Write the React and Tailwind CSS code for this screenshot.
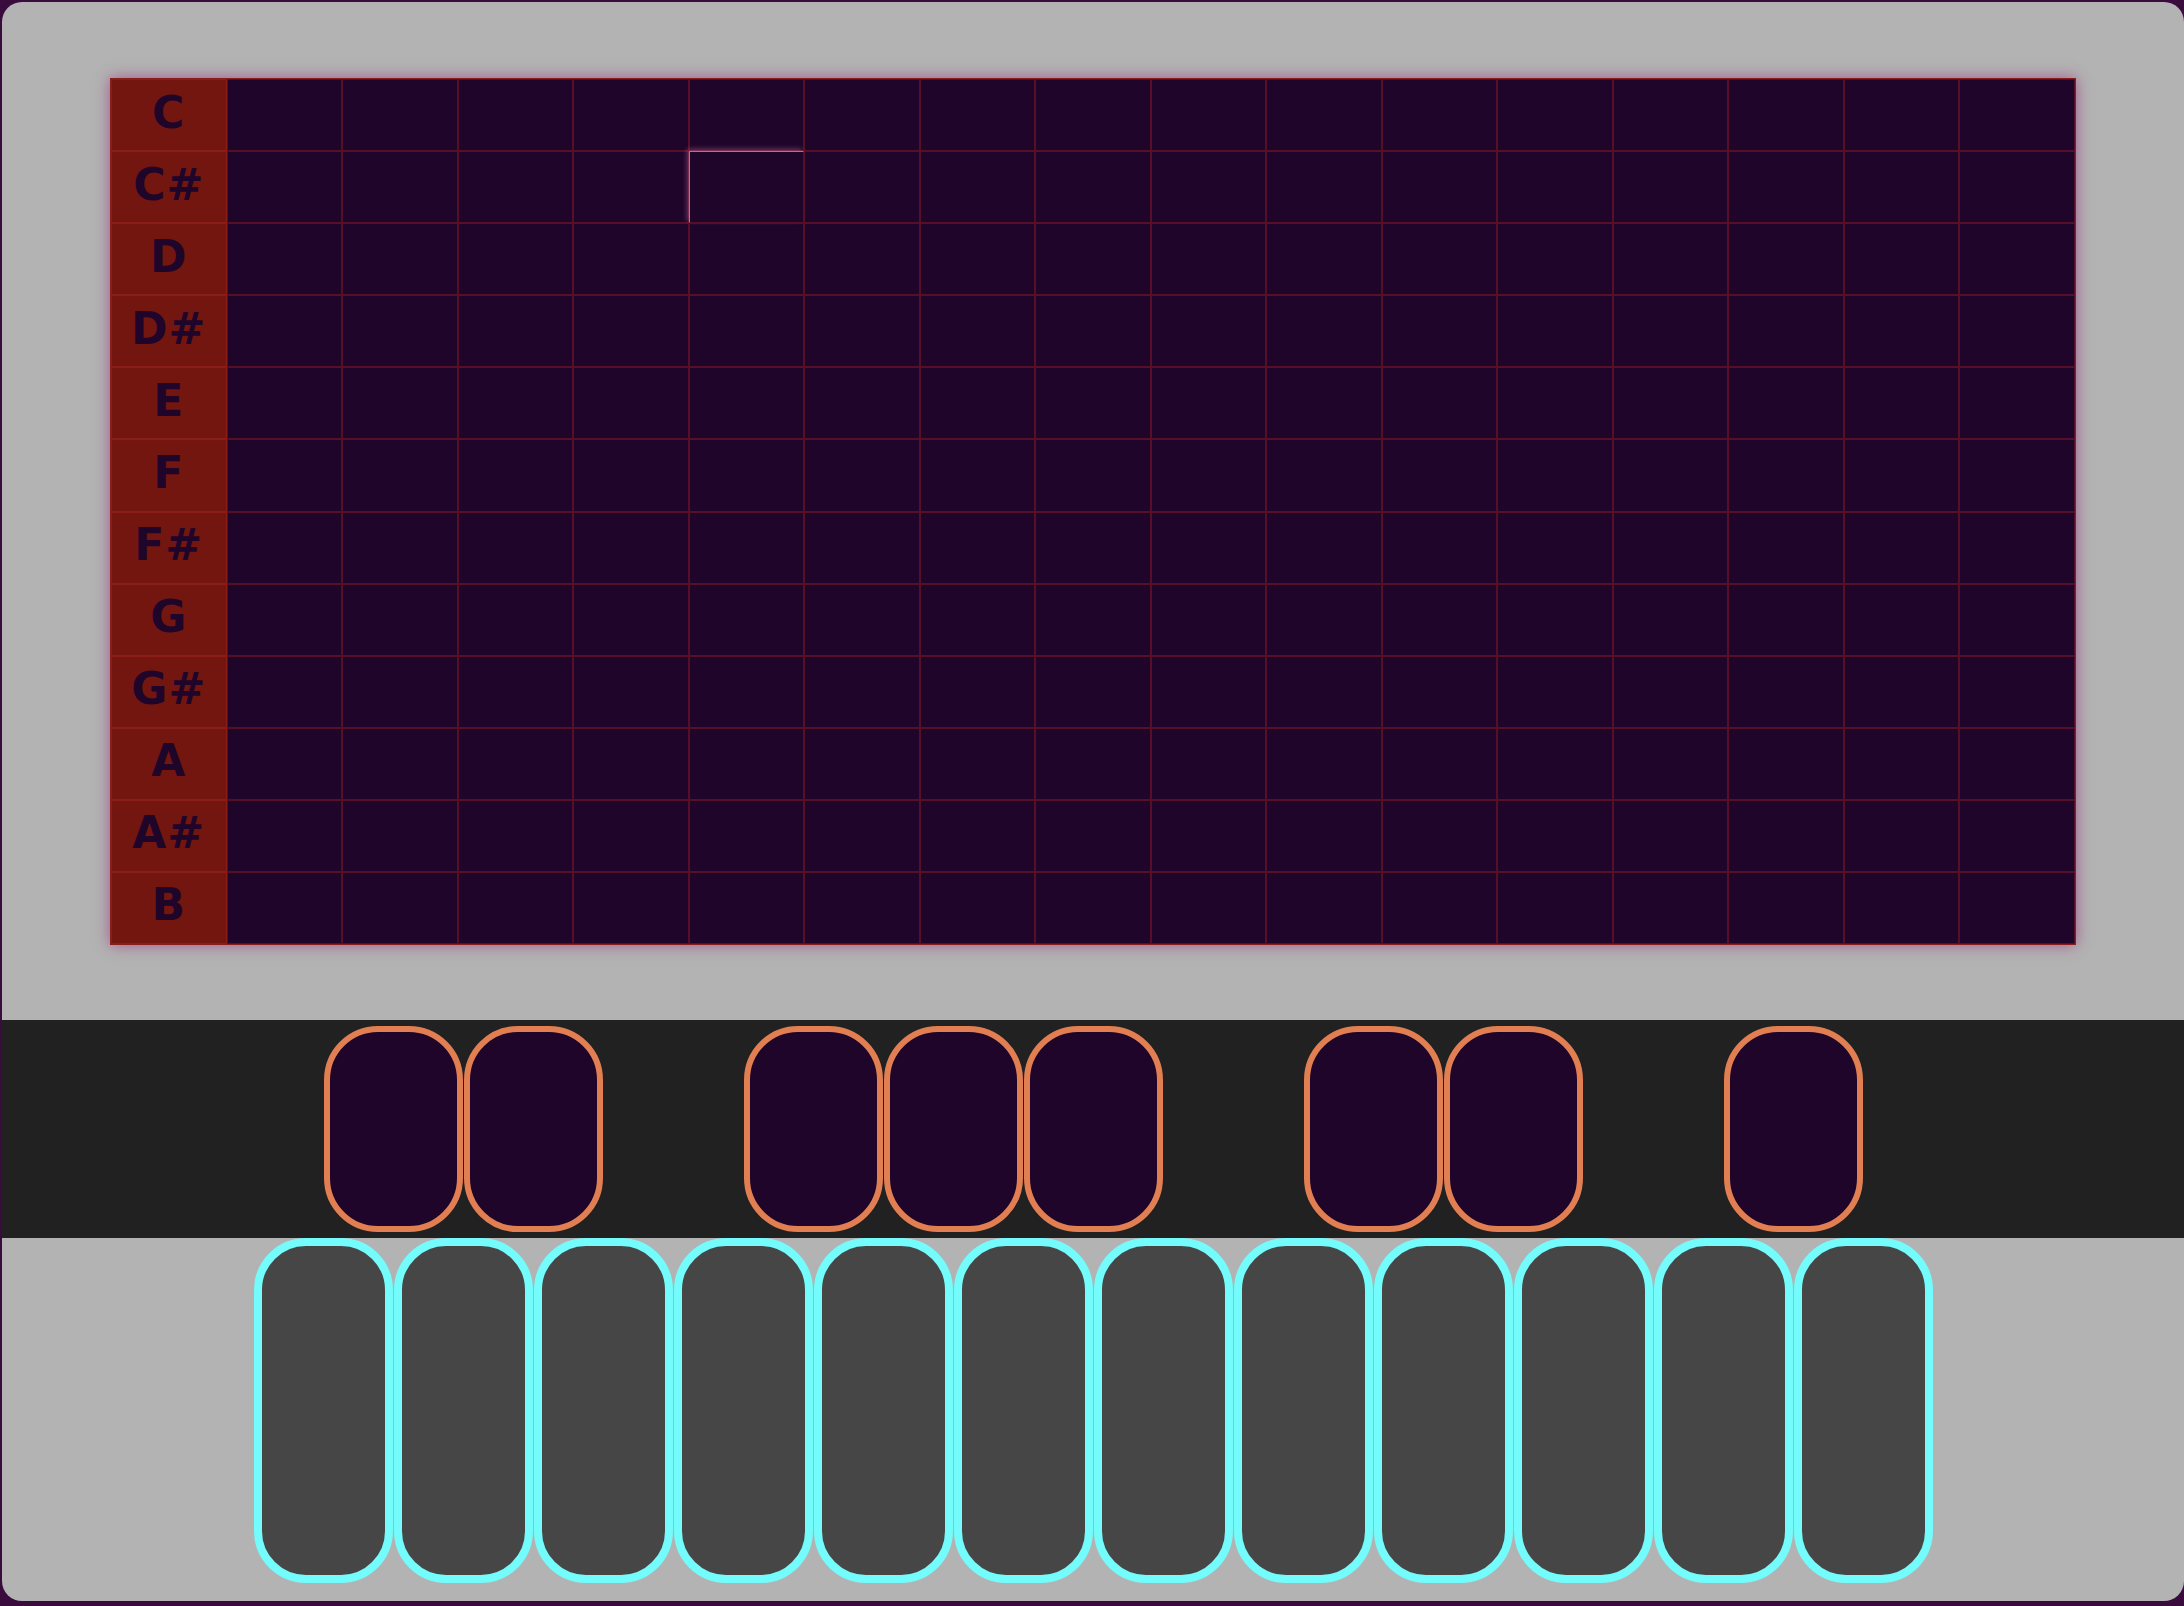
import React from "react";

const NOTES = ["C", "C#", "D", "D#", "E", "F", "F#", "G", "G#", "A", "A#", "B"];
const BLACK = [true, true, false, true, true, true, false, true, true, false, true];

export default function App() {
  return (
    <div className="min-h-screen w-full bg-[#3a0b3d] pt-[2px] pl-[2px]">
      <div className="flex h-[1599px] w-[2182px] flex-col overflow-hidden rounded-[20px] bg-[#b3b3b3]">
        <div className="h-[76px] shrink-0" />
        <div className="mx-auto grid h-[867px] w-[1966px] shrink-0 grid-cols-17 grid-rows-12 border border-[#8a1c1c] bg-[#1e0529] shadow-[0_0_14px_rgba(150,40,120,0.65)]">
          {NOTES.map((note, r) => (
            <React.Fragment key={note}>
              <div className="flex items-center justify-center border border-[#8c1d16] bg-[#731610]">
                <span className="mb-[5px] text-[44px] leading-none font-bold tracking-[1px] text-[#1e0529] [font-family:'DejaVu_Sans',sans-serif]">
                  {note}
                </span>
              </div>
              {Array.from({ length: 16 }).map((_, c) =>
                r === 1 && c === 4 ? (
                  <div
                    key={c}
                    className="border border-[#560f26] border-t-[#c06a98] border-l-[#c06a98] shadow-[-2px_-2px_5px_rgba(210,110,170,0.45)]"
                  />
                ) : (
                  <div key={c} className="border border-[#560f26]" />
                )
              )}
            </React.Fragment>
          ))}
        </div>
        <div className="h-[75px] shrink-0" />
        <div className="flex h-[218px] shrink-0 items-center justify-center gap-[1px] bg-[#212121]">
          {BLACK.map((on, i) =>
            on ? (
              <div
                key={i}
                className="h-[206px] w-[139px] rounded-[54px] border-[6px] border-[#e17f52] bg-[#1e0529]"
              />
            ) : (
              <div key={i} className="h-[206px] w-[139px]" />
            )
          )}
        </div>
        <div className="flex h-[345px] shrink-0 justify-center gap-[1px]">
          {NOTES.map((n) => (
            <div
              key={n}
              className="h-[345px] w-[139px] rounded-[52px] border-[8px] border-[#74fbfb] bg-[#464646]"
            />
          ))}
        </div>
      </div>
    </div>
  );
}
